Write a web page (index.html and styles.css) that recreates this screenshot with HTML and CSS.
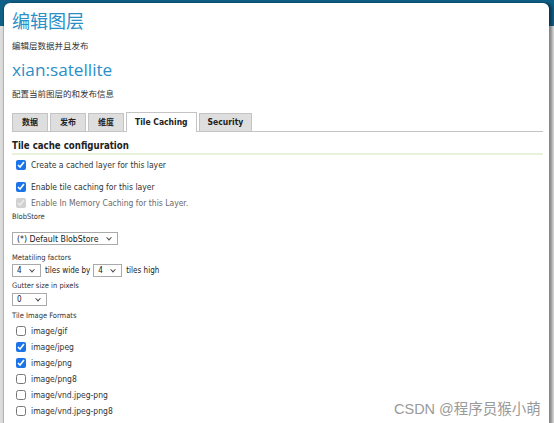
FILE: index.html
```html
<!DOCTYPE html>
<html>
<head>
<meta charset="utf-8">
<link rel="stylesheet" href="styles.css">
</head>
<body>
<div class="panel">
  <h1 class="title">编辑图层</h1>
  <p class="sub s1">编辑层数据并且发布</p>
  <h2 class="title">xian:satellite</h2>
  <p class="sub s2">配置当前图层的和发布信息</p>
  <div class="tabs">
    <span class="tab cn">数据</span>
    <span class="tab cn">发布</span>
    <span class="tab cn">维度</span>
    <span class="tab active">Tile Caching</span>
    <span class="tab">Security</span>
  </div>
  <h3 class="section">Tile cache configuration</h3>
  <label class="chk c1"><input type="checkbox" checked> Create a cached layer for this layer</label>
  <label class="chk c2"><input type="checkbox" checked> Enable tile caching for this layer</label>
  <label class="chk c3 dis"><input type="checkbox" checked disabled> Enable In Memory Caching for this Layer.</label>
  <div class="lbl l1">BlobStore</div>
  <div class="row r1"><span class="sel big">(*) Default BlobStore <i class="arr"></i></span></div>
  <div class="lbl l2">Metatiling factors</div>
  <div class="row r2"><span class="sel sm">4 <i class="arr"></i></span><span class="txt">tiles wide by</span><span class="sel sm">4 <i class="arr"></i></span><span class="txt">tiles high</span></div>
  <div class="lbl l3">Gutter size in pixels</div>
  <div class="row r3"><span class="sel sm0">0 <i class="arr"></i></span></div>
  <div class="lbl l4">Tile Image Formats</div>
  <div class="formats">
    <label class="fmt"><input type="checkbox"> image/gif</label>
    <label class="fmt"><input type="checkbox" checked> image/jpeg</label>
    <label class="fmt"><input type="checkbox" checked> image/png</label>
    <label class="fmt"><input type="checkbox"> image/png8</label>
    <label class="fmt"><input type="checkbox"> image/vnd.jpeg-png</label>
    <label class="fmt"><input type="checkbox"> image/vnd.jpeg-png8</label>
  </div>
</div>
<div class="watermark">CSDN @程序员猴小萌</div>
</body>
</html>
```
FILE: styles.css
```css
html, body { margin: 0; padding: 0; }
body {
  width: 554px;
  height: 423px;
  overflow: hidden;
  background: linear-gradient(#0f5f86 0, #0f5f86 26px, #dcdcdc 26px);
  font-family: "DejaVu Sans Condensed", "DejaVu Sans", "Noto Sans CJK SC", sans-serif;
  font-stretch: condensed;
  position: relative;
}
.panel {
  margin: 3px 5px 0 4px;
  height: 430px;
  background: #fff;
  border-radius: 6px 6px 0 0;
  box-shadow: 3px 0 3px rgba(0,0,0,0.4), -1px 0 1px rgba(0,0,0,0.2);
  padding: 6px 0 0 8px;
  box-sizing: border-box;
  color: #333;
  display: flex;
  flex-direction: column;
  align-items: flex-start;
}
.title {
  margin: 0;
  color: #2b8fc7;
  font-weight: normal;
  font-family: "Open Sans", "Noto Sans CJK SC", sans-serif;
  font-stretch: normal;
  font-size: 18px;
  line-height: 24px;
}
h2.title { font-size: 17.2px; line-height: 26px; margin-top: 6px; }
.sub {
  margin: 6px 0 0;
  font-size: 8.5px;
  line-height: 12px;
  font-family: "Noto Sans CJK SC", sans-serif;
  color: #333;
}
.sub.s2 { margin-top: 4px; }
.tabs {
  align-self: stretch;
  display: flex;
  align-items: flex-start;
  gap: 2px;
  margin: 14px 6px 0 0;
  border-bottom: 1px solid #c4c4c4;
  height: 18px;
}
.tab {
  display: block;
  background: #dedede;
  border: 1px solid #c4c4c4;
  border-bottom: none;
  box-sizing: border-box;
  height: 18px;
  padding: 0 8px;
  font-size: 8.5px;
  font-weight: bold;
  line-height: 17px;
  color: #222;
}
.tab.cn { font-size: 8px; padding: 0 9px; }
.tab.active {
  background: #fff;
  margin-top: -1px;
  height: 20px;
  line-height: 19px;
  padding: 0 8px;
}
.section {
  align-self: stretch;
  margin: 7px 6px 0 0;
  font-size: 9.6px;
  font-weight: bold;
  line-height: 14px;
  color: #222;
  border-bottom: 2px solid #e7f2da;
}
.chk {
  display: flex;
  align-items: center;
  font-size: 8.5px;
  color: #333;
  height: 14px;
  margin-left: 2px;
}
.chk.c1 { margin-top: 3px; }
.chk.c2 { margin-top: 8px; }
.chk.c3 { margin-top: 2px; }
.chk.dis { color: #6a6a6a; }
input[type=checkbox] {
  width: 10px;
  height: 10px;
  margin: 0 5px 0 2px;
  accent-color: #1a73e8;
}
.lbl {
  font-size: 7.5px;
  line-height: 10px;
  color: #333;
}
.l1 { margin-top: 1.5px; }
.r1 { margin-top: 10.5px; }
.l2 { margin-top: 7.5px; }
.r2 { margin-top: 1.5px; }
.l3 { margin-top: 3.5px; }
.r3 { margin-top: 2.5px; }
.l4 { margin-top: 4.5px; }
.row {
  display: flex;
  align-items: center;
  height: 13px;
}
.sel {
  display: flex;
  align-items: center;
  justify-content: space-between;
  border: 1px solid #aaa;
  background: #fff;
  font-size: 8px;
  height: 13px;
  box-sizing: border-box;
  padding: 0 4px 0 4px;
  color: #222;
  white-space: nowrap;
}
.sel.big { width: 106px; font-size: 8.7px; }
.sel.sm { width: 29px; }
.sel.sm0 { width: 35px; }
.arr {
  width: 3px; height: 3px;
  border-right: 1px solid #444;
  border-bottom: 1px solid #444;
  transform: rotate(45deg) translate(-1px,-1px);
  margin-right: 2px;
}
.txt { font-size: 8px; margin: 0 3px 0 4px; color: #222; }
.formats { margin-top: 2px; }
.fmt {
  display: flex;
  align-items: center;
  height: 16px;
  font-size: 8.5px;
  color: #333;
  margin-left: 2px;
}
.watermark {
  position: absolute;
  left: 394px;
  top: 397px;
  font-family: "Liberation Sans", "Noto Sans CJK SC", sans-serif;
  font-size: 14.5px;
  color: #9a9a9a;
}
```
